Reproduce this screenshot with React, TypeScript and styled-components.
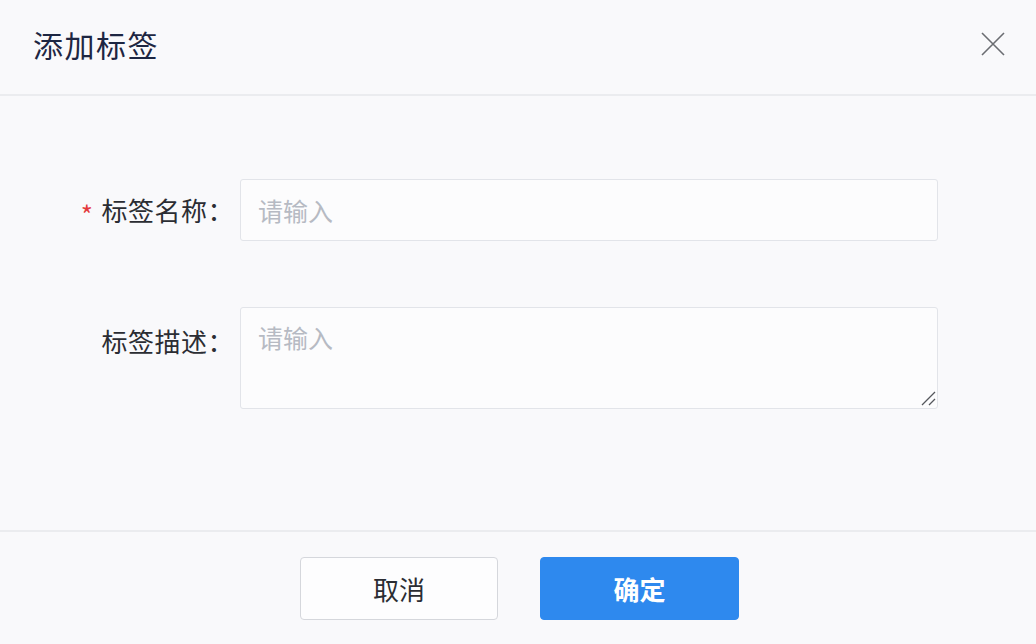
import styled, { createGlobalStyle } from 'styled-components';

const GlobalStyle = createGlobalStyle`
  html, body {
    margin: 0;
    padding: 0;
    background: #f9f9fb;
  }
  * {
    box-sizing: border-box;
  }
`;

const FONT = `"Noto Sans CJK SC", "Noto Sans", sans-serif`;

function CloseIcon() {
  return (
    <svg width="24" height="24" viewBox="0 0 24 24" fill="none">
      <path d="M1 1L23 23M23 1L1 23" stroke="#6b6d72" strokeWidth="1.6" />
    </svg>
  );
}

function ResizeGrip() {
  return (
    <svg width="16" height="16" viewBox="0 0 16 16" fill="none">
      <path d="M2 15L15 2M9 15L15 9" stroke="#55575c" strokeWidth="1.3" />
    </svg>
  );
}

export default function App() {
  return (
    <>
      <GlobalStyle />
      <Dialog>
        <Header>
          <Title>添加标签</Title>
          <CloseButton aria-label="关闭">
            <CloseIcon />
          </CloseButton>
        </Header>
        <Body>
          <Form>
            <Label>
              <Star>*</Star>标签名称：
            </Label>
            <TextInput placeholder="请输入" />
            <Label $top>标签描述：</Label>
            <AreaWrap>
              <TextArea placeholder="请输入" />
              <Grip>
                <ResizeGrip />
              </Grip>
            </AreaWrap>
          </Form>
        </Body>
        <Footer>
          <Button>取消</Button>
          <Button $primary>确定</Button>
        </Footer>
      </Dialog>
    </>
  );
}

const Dialog = styled.div`
  width: 1036px;
  height: 644px;
  display: flex;
  flex-direction: column;
  background: #f9f9fb;
  font-family: ${FONT};
`;

const Header = styled.div`
  height: 96px;
  flex: none;
  display: flex;
  align-items: center;
  justify-content: space-between;
  padding: 0 31px 6px 33px;
  border-bottom: 2px solid #ebecef;
`;

const Title = styled.h1`
  margin: 0;
  font-size: 30px;
  font-weight: 400;
  letter-spacing: 1.5px;
  color: #1d2642;
`;

const CloseButton = styled.button`
  display: flex;
  padding: 0;
  border: none;
  background: none;
  cursor: pointer;
`;

const Body = styled.div`
  flex: 1;
  padding-top: 83px;
`;

const Form = styled.div`
  display: grid;
  grid-template-columns: 234px 698px;
  column-gap: 6px;
  row-gap: 66px;
`;

const Label = styled.label<{ $top?: boolean }>`
  display: flex;
  align-items: center;
  justify-content: flex-end;
  align-self: ${({ $top }) => ($top ? 'start' : 'center')};
  padding-top: ${({ $top }) => ($top ? '16px' : '0')};
  font-size: 26px;
  letter-spacing: 0.5px;
  line-height: 36px;
  color: #2b2d33;
`;

const Star = styled.span`
  color: #e4393c;
  font-size: 26px;
  margin-right: 8px;
  line-height: 1;
  position: relative;
  top: 4px;
`;

const fieldStyle = `
  width: 100%;
  border: 1px solid #e2e4e9;
  border-radius: 3px;
  background: #fcfcfd;
  font-family: ${FONT};
  font-size: 25px;
  color: #2b2d33;
  outline: none;
  &::placeholder {
    color: #b6bac3;
  }
`;

const TextInput = styled.input`
  ${fieldStyle}
  height: 62px;
  padding: 0 17px;
`;

const AreaWrap = styled.div`
  position: relative;
  height: 102px;
`;

const TextArea = styled.textarea`
  ${fieldStyle}
  display: block;
  height: 102px;
  padding: 11px 17px;
  line-height: 36px;
  resize: none;
`;

const Grip = styled.div`
  position: absolute;
  right: 2px;
  bottom: 3px;
  display: flex;
  pointer-events: none;
`;

const Footer = styled.div`
  height: 114px;
  flex: none;
  display: flex;
  justify-content: center;
  align-items: flex-start;
  gap: 42px;
  padding: 25px 0 0 3px;
  border-top: 2px solid #ebecef;
`;

const Button = styled.button<{ $primary?: boolean }>`
  width: ${({ $primary }) => ($primary ? '199px' : '198px')};
  height: 63px;
  border-radius: 4px;
  font-family: ${FONT};
  font-size: 26px;
  cursor: pointer;
  border: 1px solid ${({ $primary }) => ($primary ? '#2e89ee' : '#d5d7dc')};
  background: ${({ $primary }) => ($primary ? '#2e89ee' : '#fdfdfe')};
  color: ${({ $primary }) => ($primary ? '#ffffff' : '#2b2d33')};
  font-weight: ${({ $primary }) => ($primary ? 700 : 400)};
`;
